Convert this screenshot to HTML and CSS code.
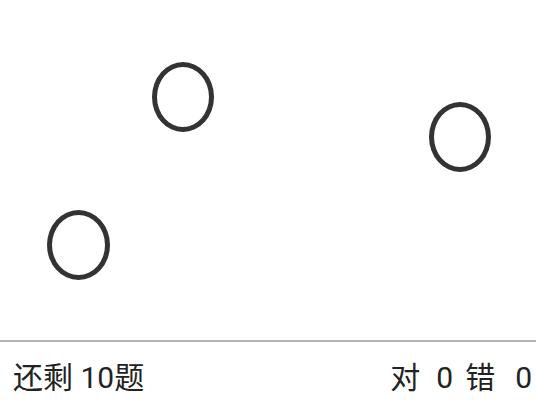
FILE: index.html
```html
<!DOCTYPE html>
<html lang="zh">
<head>
<meta charset="utf-8">
<link rel="stylesheet" href="styles.css">
</head>
<body>
<div class="app">
  <div class="stage">
    <div class="ring r1"></div>
    <div class="ring r2"></div>
    <div class="ring r3"></div>
  </div>
  <div class="bar">
    <div class="left">还剩 10题</div>
    <div class="right">
      <span class="lbl">对</span><span class="num n1">0</span><span class="lbl l2">错</span><span class="num n2">0</span>
    </div>
  </div>
</div>
</body>
</html>
```
FILE: styles.css
```css
html, body {
  margin: 0;
  padding: 0;
  background: #fff;
}
.app {
  width: 536px;
  height: 404px;
  display: flex;
  flex-direction: column;
  font-family: Roboto, "Noto Sans CJK SC", sans-serif;
  color: #222;
}
.stage {
  position: relative;
  height: 342px;
  border-bottom: 2px solid #b3b3b3;
  box-sizing: border-box;
}
.ring {
  position: absolute;
  width: 62px;
  height: 70px;
  box-sizing: border-box;
  border: 5px solid #333;
  border-radius: 50%;
}
.r1 { left: 152px; top: 62px; }
.r2 { left: 47px; top: 210px; width: 63px; }
.r3 { left: 429px; top: 102px; }
.bar {
  flex: 1;
  display: flex;
  justify-content: space-between;
  align-items: center;
  padding: 3px 4px 0 13px;
  font-size: 30px;
  white-space: pre;
}
.right {
  display: flex;
  align-items: baseline;
}
.n1 { margin-left: 16px; }
.l2 { margin-left: 12px; }
.n2 { margin-left: 20px; }
```
